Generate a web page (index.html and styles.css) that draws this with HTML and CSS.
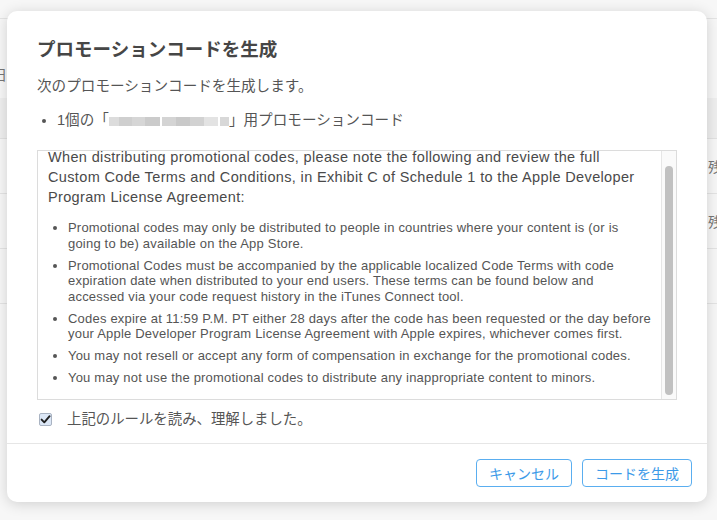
FILE: index.html
```html
<!DOCTYPE html>
<html lang="ja">
<head>
<meta charset="utf-8">
<title>プロモーションコードを生成</title>
<link rel="stylesheet" href="styles.css">
</head>
<body>
<div class="page">
  <div class="bg-row bg-top"></div>
  <div class="bg-row bg-r1"><span class="bg-left">終了日</span></div>
  <div class="bg-row bg-head"></div>
  <div class="bg-row bg-r2"><span class="bg-right">残り</span></div>
  <div class="bg-row bg-r2"><span class="bg-right">残り</span></div>
  <div class="bg-row bg-r3"></div>
</div>

<div class="modal">
  <div class="modal-body">
    <h1 class="title">プロモーションコードを生成</h1>
    <p class="subtitle">次のプロモーションコードを生成します。</p>
    <ul class="summary">
      <li>1個の「<span class="redacted"><span class="mosaic m1"></span><span class="mosaic m2"></span><span class="mosaic m3"></span></span>」用プロモーションコード</li>
    </ul>
    <div class="terms">
      <div class="terms-view">
        <div class="terms-content">
          <p class="terms-intro">When distributing promotional codes, please note the following and review the full Custom Code Terms and Conditions, in Exhibit C of Schedule 1 to the Apple Developer Program License Agreement:</p>
          <ul class="terms-list">
            <li>Promotional codes may only be distributed to people in countries where your content is (or is going to be) available on the App Store.</li>
            <li>Promotional Codes must be accompanied by the applicable localized Code Terms with code expiration date when distributed to your end users. These terms can be found below and accessed via your code request history in the iTunes Connect tool.</li>
            <li>Codes expire at 11:59 P.M. PT either 28 days after the code has been requested or the day before your Apple Developer Program License Agreement with Apple expires, whichever comes first.</li>
            <li>You may not resell or accept any form of compensation in exchange for the promotional codes.</li>
            <li>You may not use the promotional codes to distribute any inappropriate content to minors.</li>
          </ul>
        </div>
      </div>
      <div class="scroll-track"><div class="scroll-thumb"></div></div>
    </div>
    <label class="agree">
      <span class="checkbox"><svg width="13" height="13" viewBox="0 0 13 13"><path d="M2.6 6.6 L5.3 9.3 L10.6 3.2" fill="none" stroke="#1f1f1f" stroke-width="1.9" stroke-linecap="round" stroke-linejoin="round"/></svg></span>
      <span class="agree-text">上記のルールを読み、理解しました。</span>
    </label>
  </div>
  <div class="modal-footer">
    <button class="btn">キャンセル</button>
    <button class="btn">コードを生成</button>
  </div>
</div>
</body>
</html>
```

FILE: styles.css
```css
html, body {
  margin: 0;
  padding: 0;
}
body {
  width: 717px;
  height: 520px;
  overflow: hidden;
  background: #f7f7f7;
  font-family: "Liberation Sans", "Noto Sans CJK JP", sans-serif;
  position: relative;
}

/* background page */
.page {
  width: 717px;
}
.bg-row {
  box-sizing: border-box;
  border-bottom: 1px solid #e4e4e4;
  display: flex;
  align-items: center;
  font-size: 14px;
  color: #777;
  white-space: nowrap;
}
.bg-top { height: 19px; }
.bg-r1 { height: 79px; border-bottom: none; align-items: flex-end; padding-bottom: 14px; }
.bg-head { height: 41px; background: #efefef; border-bottom: 1px solid #e2e2e2; }
.bg-r2 { height: 55px; padding-left: 708px; }
.bg-r3 { height: 55px; }
.bg-left { margin-left: -35px; }

/* modal */
.modal {
  position: absolute;
  left: 7px;
  top: 11px;
  width: 700px;
  height: 491px;
  background: #fff;
  border-radius: 10px;
  box-shadow: 0 2px 14px rgba(0, 0, 0, 0.16);
  display: flex;
  flex-direction: column;
}
.modal-body {
  padding: 27px 30px 14px;
}
.title {
  margin: 0;
  font-size: 18.5px;
  line-height: 24px;
  font-weight: bold;
  color: #464646;
}
.subtitle {
  margin: 14px 0 0;
  font-size: 14.6px;
  line-height: 20px;
  color: #555;
}
.summary {
  margin: 14px 0 0;
  padding-left: 20px;
  font-size: 14.6px;
  line-height: 20px;
  color: #555;
}
.redacted {
  display: inline-flex;
  gap: 2px;
  vertical-align: -1px;
}
.mosaic {
  display: inline-block;
  height: 9px;
}
.m1 {
  width: 51px;
  background: linear-gradient(90deg, #dcdcdc 0 20%, #cfcfcf 20% 45%, #d6d6d6 45% 70%, #cbcbcb 70% 100%);
}
.m2 {
  width: 56px;
  background: linear-gradient(90deg, #d4d4d4 0 25%, #c9c9c9 25% 50%, #d2d2d2 50% 75%, #e3e3e3 75% 100%);
}
.m3 {
  width: 9px;
  background: #d8d8d8;
}

.terms {
  margin-top: 20px;
  height: 250px;
  box-sizing: border-box;
  border: 1px solid #dcdcdc;
  display: flex;
}
.terms-view {
  flex: 1;
  overflow: hidden;
  padding: 0 10px;
}
.terms-content {
  margin-top: -4px;
}
.terms-intro {
  margin: 0;
  font-size: 14.5px;
  letter-spacing: 0.35px;
  line-height: 20px;
  color: #4a4a4a;
}
.terms-list {
  margin: 13px 0 0;
  padding-left: 20px;
  font-size: 13px;
  letter-spacing: 0.2px;
  line-height: 15.5px;
  color: #555;
}
.terms-list li {
  margin-bottom: 6.5px;
}
.scroll-track {
  width: 14px;
  border-left: 1px solid #e6e6e6;
  background: #fafafa;
  display: flex;
  justify-content: center;
}
.scroll-thumb {
  width: 8px;
  height: 229px;
  margin-top: 15px;
  background: #c1c1c1;
  border-radius: 4px;
}

.agree {
  margin-top: 8px;
  margin-bottom: 1px;
  height: 20px;
  display: flex;
  align-items: center;
  font-size: 14.4px;
  color: #555;
}
.checkbox {
  width: 13px;
  height: 13px;
  box-sizing: border-box;
  margin-left: 2px;
  margin-right: 15px;
  margin-top: 2px;
  border: 1px solid #a9b3c2;
  border-radius: 2px;
  background: #dce7f6;
  display: flex;
}
.checkbox svg {
  margin: -1px;
}
.agree-text {
  margin-top: -1px;
}

.modal-footer {
  border-top: 1px solid #e6e6e6;
  padding: 15px 15px;
  display: flex;
  justify-content: flex-end;
  gap: 10px;
}
.btn {
  height: 28px;
  padding: 0 12px;
  background: #fff;
  border: 1px solid #5aaef0;
  border-radius: 4px;
  color: #3c9ae8;
  font-family: "Noto Sans CJK JP", sans-serif;
  font-size: 14px;
  line-height: 26px;
}
```
